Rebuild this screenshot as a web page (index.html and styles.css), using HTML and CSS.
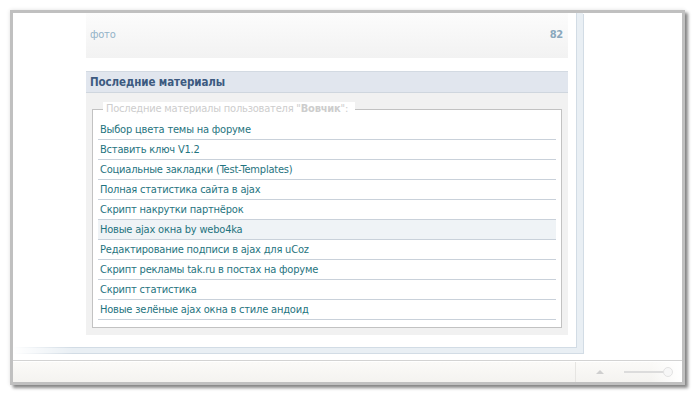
FILE: index.html
```html
<!DOCTYPE html>
<html lang="ru">
<head>
  <meta charset="UTF-8">
  <title>Последние материалы</title>
  <link rel="stylesheet" href="styles.css">
</head>
<body>
  <!-- WINDOW -->
  <div class="window">
    <div class="viewport">
      <div class="frame">
        <div class="column">
          <!-- stats row -->
          <div class="stat-row">
            <span class="stat-name">фото</span>
            <span class="stat-count">82</span>
          </div>

          <!-- latest materials block -->
          <div class="block-title">Последние материалы</div>
          <div class="block-body">
            <fieldset class="materials">
              <legend>Последние материалы пользователя "<b>Вовчик</b>": </legend>
              <div class="item">Выбор цвета темы на форуме</div>
              <div class="item">Вставить ключ V1.2</div>
              <div class="item">Социальные закладки (Test-Templates)</div>
              <div class="item">Полная статистика сайта в ajax</div>
              <div class="item">Скрипт накрутки партнёрок</div>
              <div class="item item-hover">Новые ajax окна by webo4ka</div>
              <div class="item">Редактирование подписи в ajax для uCoz</div>
              <div class="item">Скрипт рекламы tak.ru в постах на форуме</div>
              <div class="item">Скрипт статистика</div>
              <div class="item">Новые зелёные ajax окна в стиле андоид</div>
            </fieldset>
          </div>
        </div>
      </div>
    </div>

    <!-- STATUS BAR -->
    <div class="statusbar">
      <div class="status-main"></div>
      <div class="status-tools">
        <span class="arrow"></span>
        <span class="slider"><span class="knob"></span></span>
      </div>
    </div>
  </div>
</body>
</html>
```

FILE: styles.css
```css
/* Reset */
* {
  margin: 0;
  padding: 0;
  box-sizing: border-box;
}
body {
  background-color: #fff;
  font-family: "DejaVu Sans Condensed", "Liberation Sans", sans-serif;
  font-size: 11px;
  letter-spacing: -0.2px;
}
/* Window frame */
.window {
  margin: 10px;
  width: 675px;
  height: 375px;
  border: 3px solid #c0c0c0;
  background-color: #fff;
  box-shadow: 3px 3px 3px rgba(0,0,0,0.45), 0 0 4px rgba(0,0,0,0.12);
  display: flex;
  flex-direction: column;
}
.viewport {
  height: 348px;
  border-bottom: 1px solid #d3d3d3;
}
.frame {
  position: relative;
  width: 570px;
  height: 340px;
  padding-left: 73px;
  border-right: 6px solid #e9eff4;
  border-bottom: 5px solid #e9eff4;
  box-shadow: inset -1px -1px 0 #d2dce5, 1px 1px 0 #d2dce5;
}
/* fade of the bottom edge on the left */
.frame::after {
  content: "";
  position: absolute;
  left: 0;
  bottom: -6px;
  width: 60px;
  height: 7px;
  background: linear-gradient(to right, #fff, rgba(255,255,255,0));
}
.column {
  width: 482px;
}
/* Stats row */
.stat-row {
  height: 45px;
  display: flex;
  justify-content: space-between;
  align-items: center;
  padding: 0 5px 2px 4px;
  margin-bottom: 13px;
  background: linear-gradient(#fcfcfc, #f2f2f2);
  color: #93b3c8;
}
.stat-count {
  font-weight: bold;
  color: #8aa8bd;
}
/* Block */
.block-title {
  height: 22px;
  line-height: 20px;
  padding-left: 4px;
  background-color: #e1e6ee;
  border-top: 1px solid #d3dae2;
  border-bottom: 1px solid #cfd6de;
  color: #3c5a80;
  font-weight: bold;
  font-size: 11.5px;
  letter-spacing: -0.1px;
}
.block-body {
  height: 242px;
  padding: 9px 6px 0;
  background-color: #f1f1f1;
}
.materials {
  height: 226px;
  border: 1px solid #c2c2c2;
  background-color: #fff;
  padding: 4px 5px 0;
}
.materials legend {
  margin-left: 5px;
  padding: 0 7px 0 3px;
  line-height: 14px;
  background-color: #fff;
  color: #cdcdcd;
}
.item {
  height: 20px;
  line-height: 19px;
  padding-left: 2px;
  border-bottom: 1px solid #c9d1da;
  color: #1f7480;
  cursor: pointer;
}
.item-hover {
  background-color: #eff3f6;
}
/* Status bar */
.statusbar {
  flex: 1;
  display: flex;
  margin-top: 1px;
  background: linear-gradient(#fbfaf8, #f4f3f0);
}
.status-main {
  width: 563px;
  border-right: 1px solid #e6e5e2;
}
.status-tools {
  flex: 1;
  display: flex;
  align-items: center;
  padding-left: 20px;
  background: linear-gradient(to right, rgba(255,255,255,0) 70%, #fff);
}
.arrow {
  width: 0;
  height: 0;
  border-left: 4px solid transparent;
  border-right: 4px solid transparent;
  border-bottom: 4px solid #cfcfcf;
}
.slider {
  position: relative;
  margin-left: 20px;
  width: 44px;
  height: 2px;
  background-color: #dcdcdc;
}
.knob {
  position: absolute;
  right: -5px;
  top: -4px;
  width: 10px;
  height: 10px;
  border-radius: 50%;
  border: 1px solid #e2e2e2;
  background-color: #f7f7f7;
}
```
